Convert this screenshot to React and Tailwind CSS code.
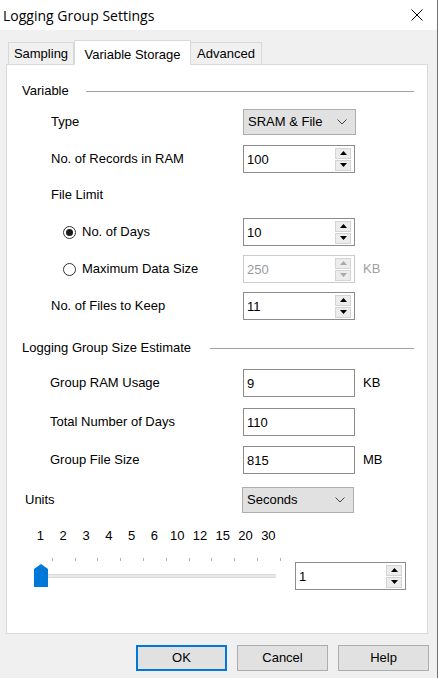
import React from "react";

const font = { fontFamily: '"Liberation Sans", Arial, sans-serif' };

const SpinButtons = ({ disabled }) => {
  const c = disabled ? "#a8a8a8" : "#000";
  return (
    <div className="flex flex-col gap-[1px] pr-[3px]">
      <div className="w-[16px] h-[11px] bg-[#ececec] border border-[#d4d4d4] flex items-center justify-center">
        <svg width="7" height="4" viewBox="0 0 7 4">
          <polygon points="3.5,0 7,4 0,4" fill={c} />
        </svg>
      </div>
      <div className="w-[16px] h-[11px] bg-[#ececec] border border-[#d4d4d4] flex items-center justify-center">
        <svg width="7" height="4" viewBox="0 0 7 4">
          <polygon points="0,0 7,0 3.5,4" fill={c} />
        </svg>
      </div>
    </div>
  );
};

const NumBox = ({ value, spin, disabled, w = "w-[112px]" }) => (
  <div
    className={`${w} h-[28px] border flex items-center bg-white ${
      disabled ? "border-[#cccccc] text-[#9a9a9a]" : "border-[#8c8c8c] text-black"
    }`}
  >
    <span className="flex-1 pl-[3px] text-[13px] leading-none">{value}</span>
    {spin && <SpinButtons disabled={disabled} />}
  </div>
);

const Combo = ({ value, w = "w-[113px]" }) => (
  <div className={`${w} h-[26px] bg-[#e1e1e1] border border-[#adadad] flex items-center pl-[4px] pr-[8px]`}>
    <span className="flex-1 text-[13px]">{value}</span>
    <svg width="10" height="6" viewBox="0 0 10 6">
      <polyline points="0.5,0.5 5,5 9.5,0.5" fill="none" stroke="#444" strokeWidth="1" />
    </svg>
  </div>
);

const Row = ({ pl, lw, label, children, unit, unitGray, mt }) => (
  <div className={`flex items-center ${mt}`} style={{ paddingLeft: pl }}>
    <div className="text-[13px] shrink-0" style={{ width: lw }}>
      {label}
    </div>
    {children}
    {unit && (
      <span className={`ml-[8px] text-[13px] ${unitGray ? "text-[#a0a0a0]" : "text-black"}`}>{unit}</span>
    )}
  </div>
);

const Radio = ({ checked, label }) => (
  <div className="flex items-center gap-[6px]">
    <div className="w-[13px] h-[13px] rounded-full border border-[#333] bg-white flex items-center justify-center">
      {checked && <div className="w-[7px] h-[7px] rounded-full bg-[#1a1a1a]" />}
    </div>
    <span className="text-[13px]">{label}</span>
  </div>
);

const Header = ({ label, mt, lineStart }) => (
  <div className={`flex items-center h-[14px] ${mt}`}>
    <span className="text-[13px] pl-[15px]" style={{ width: lineStart }}>
      {label}
    </span>
    <div className="h-px bg-[#a0a0a0] w-[328px] flex-1 mr-[13px]" />
  </div>
);

const ticks = ["1", "2", "3", "4", "5", "6", "10", "12", "15", "20", "30"];

const Btn = ({ label, primary, cls }) => (
  <div
    className={`w-[91px] h-[26px] bg-[#e1e1e1] flex items-center justify-center text-[13px] ${
      primary ? "border-2 border-[#0078d7]" : "border border-[#adadad]"
    } ${cls}`}
  >
    {label}
  </div>
);

export default function App() {
  return (
    <div className="w-[439px] h-[678px] bg-white overflow-hidden" style={font}>
      <div className="w-[438px] h-[678px] border-r border-[#707070] bg-[#f0f0f0] flex flex-col">
        {/* title bar */}
        <div className="h-[30px] bg-white flex items-center justify-between shrink-0">
          <span
            className="pl-[3px] text-[14px] text-black"
            style={{ fontFamily: '"Open Sans", "Noto Sans", sans-serif' }}
          >
            Logging Group Settings
          </span>
          <svg width="12" height="12" viewBox="0 0 12 12" className="mr-[14px]">
            <line x1="0.5" y1="0.5" x2="11.5" y2="11.5" stroke="#000" strokeWidth="1" />
            <line x1="11.5" y1="0.5" x2="0.5" y2="11.5" stroke="#000" strokeWidth="1" />
          </svg>
        </div>

        {/* tabs */}
        <div className="flex items-end h-[25px] mt-[10px] pl-[8px] relative z-10">
          <div className="w-[66px] h-[22px] mb-[1px] border border-b-0 border-[#d9d9d9] bg-[#f0f0f0] flex items-center justify-center text-[13px]">
            Sampling
          </div>
          <div className="w-[117px] h-[25px] border border-b-0 border-[#d9d9d9] bg-white flex items-start pt-[4px] justify-center text-[13px]">
            Variable Storage
          </div>
          <div className="w-[71px] h-[22px] mb-[1px] border border-b-0 border-l-0 border-[#d9d9d9] bg-[#f0f0f0] flex items-center justify-center text-[13px]">
            Advanced
          </div>
        </div>

        {/* panel */}
        <div className="ml-[6px] -mt-[1px] w-[422px] h-[570px] bg-white border border-[#d9d9d9] flex flex-col">
          <Header label="Variable" mt="mt-[19px]" lineStart={79} />

          <Row pl={44} lw={192} label="Type" mt="mt-[11px]">
            <Combo value="SRAM & File" />
          </Row>
          <Row pl={44} lw={192} label="No. of Records in RAM" mt="mt-[10px]">
            <NumBox value="100" spin />
          </Row>
          <div className="h-[14px] mt-[15px] flex items-center pl-[44px] text-[13px]">File Limit</div>
          <Row pl={56} lw={180} label={<Radio checked label="No. of Days" />} mt="mt-[16px]">
            <NumBox value="10" spin />
          </Row>
          <Row
            pl={56}
            lw={180}
            label={<Radio label="Maximum Data Size" />}
            mt="mt-[9px]"
            unit="KB"
            unitGray
          >
            <NumBox value="250" spin disabled />
          </Row>
          <Row pl={44} lw={192} label="No. of Files to Keep" mt="mt-[9px]">
            <NumBox value="11" spin />
          </Row>

          <Header label="Logging Group Size Estimate" mt="mt-[21px]" lineStart={203} />

          <Row pl={43} lw={193} label="Group RAM Usage" mt="mt-[14px]" unit="KB">
            <NumBox value="9" />
          </Row>
          <Row pl={43} lw={193} label="Total Number of Days" mt="mt-[11px]">
            <NumBox value="110" />
          </Row>
          <Row pl={43} lw={193} label="Group File Size" mt="mt-[10px]" unit="MB">
            <NumBox value="815" />
          </Row>

          <Row pl={18} lw={217} label="Units" mt="mt-[13px]">
            <Combo value="Seconds" w="w-[112px]" />
          </Row>

          {/* slider */}
          <div className="flex mt-[16px] pl-[22px]">
            {ticks.map((t) => (
              <div key={t} className="w-[22.8px] text-center text-[13px] leading-[14px]">
                {t}
              </div>
            ))}
          </div>
          <div className="flex items-start mt-[15px]">
            <div className="relative w-[271px] h-[46px] ml-[27px]">
              <div className="flex pl-[7px]">
                {ticks.map((t) => (
                  <div key={t} className="w-[22.8px] flex justify-center">
                    <div className="w-px h-[3px] bg-[#b0b0b0]" />
                  </div>
                ))}
              </div>
              <div className="absolute left-[7px] top-[16px] w-[235px] h-[4px] bg-[#e7e7e7] border-y border-[#dcdcdc]" />
              <svg width="14" height="24" viewBox="0 0 14 24" className="absolute left-0 top-[6px]">
                <polygon points="7,0 14,5 14,23 0,23 0,5" fill="#0078d7" />
              </svg>
            </div>
            <div className="mt-[4px] -ml-[10px]">
              <NumBox value="1" spin w="w-[111px]" />
            </div>
          </div>
        </div>

        {/* buttons */}
        <div className="flex mt-[11px] ml-[136px]">
          <Btn label="OK" primary />
          <Btn label="Cancel" cls="ml-[10px]" />
          <Btn label="Help" cls="ml-[10px]" />
        </div>
      </div>
    </div>
  );
}
